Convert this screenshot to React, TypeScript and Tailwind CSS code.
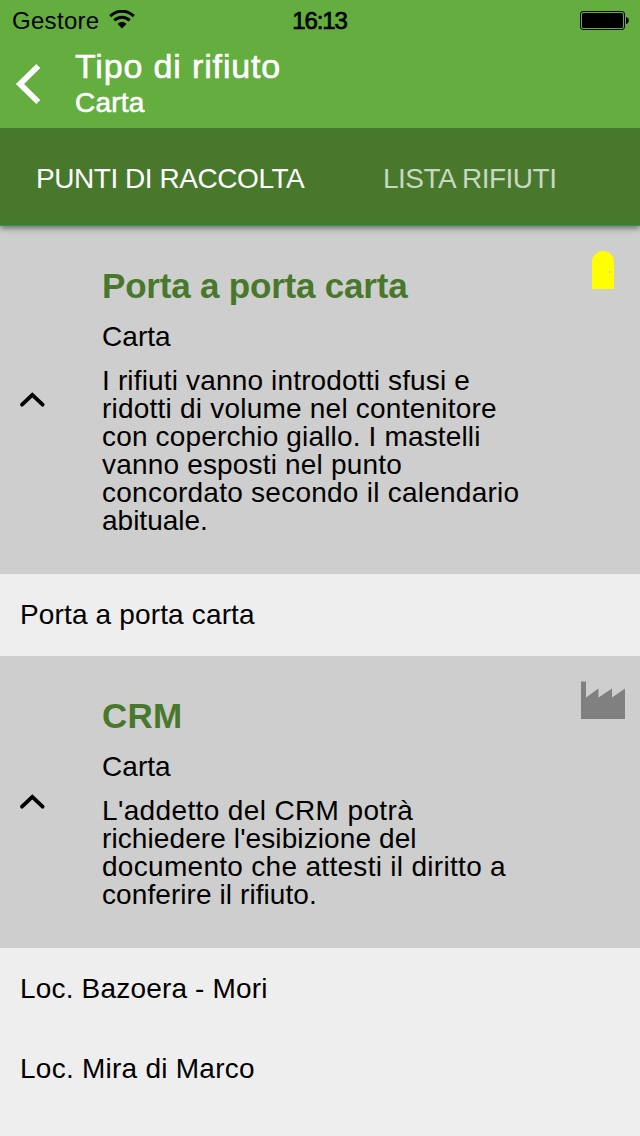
import type { ReactNode } from "react";

type Line = { text: string; tracking: string };

function StatusBar() {
  return (
    <div className="grid h-10 grid-cols-3 items-center pl-3 pr-[11px] text-2xl text-black">
      <div className="flex items-center gap-[10px] pt-[2px]">
        <span className="tracking-[0.3px]">Gestore</span>
        <svg width="26" height="19" viewBox="0 0 26 19" fill="none" stroke="#000" strokeWidth="3" className="-mt-[3px]">
          <path d="M1.2 6.2C8 -.3 18 -.3 24.8 6.2" />
          <path d="M5.3 10.4C9.7 6.2 16.3 6.2 20.7 10.4" />
          <path d="M13 18.4L8.6 13.9C11 11.5 15 11.5 17.4 13.9Z" fill="#000" stroke="none" />
        </svg>
      </div>
      <span className="pr-[2px] pt-[2px] text-center tracking-[-1.1px] [-webkit-text-stroke:0.7px_#000]">16:13</span>
      <svg width="50" height="19" viewBox="0 0 50 19" className="justify-self-end">
        <rect x="1.5" y=".5" width="44" height="18" rx="2.5" fill="none" stroke="#000" />
        <rect x="3" y="2" width="41" height="15" rx="1.5" fill="#000" />
        <path d="M47 6C50.7 6.4 50.7 12.6 47 13Z" fill="#000" />
      </svg>
    </div>
  );
}

function Header() {
  return (
    <header className="flex h-[88px] text-white">
      <svg width="74" height="88" viewBox="0 0 74 88" fill="none" stroke="#fff" strokeWidth="5.8">
        <path d="M38.3 26L20 44L38.3 62" />
      </svg>
      <div className="pl-px pt-[6px]">
        <h1 className="h-[41px] text-[34px] leading-10 tracking-[0.85px] [-webkit-text-stroke:0.6px_#fff]">Tipo di rifiuto</h1>
        <p className="h-8 text-[28px] leading-8 tracking-[0.2px] [-webkit-text-stroke:0.6px_#fff]">Carta</p>
      </div>
    </header>
  );
}

function Chevron() {
  return (
    <svg width="102" height="24" viewBox="0 0 102 24" fill="none" stroke="#000" strokeWidth="3.8" strokeLinecap="round" className="shrink-0">
      <path d="M22 16.7L32.3 6.8L42.6 16.7" />
    </svg>
  );
}

function Section({ title, titleTracking, lines, icon }: { title: string; titleTracking: string; lines: Line[]; icon: ReactNode }) {
  return (
    <section className="flex items-stretch bg-[#cecece] py-10">
      <div className="flex items-center">
        <Chevron />
      </div>
      <div className="flex-1 whitespace-nowrap text-[28px] leading-7">
        <h2 className={`mb-[17px] h-10 text-[35px] font-bold leading-10 text-[#48782c] ${titleTracking}`}>{title}</h2>
        <p className="mb-4 tracking-[0.05px]">Carta</p>
        <p className="-mb-px">
          {lines.map((line) => (
            <span key={line.text} className={`block ${line.tracking}`}>{line.text}</span>
          ))}
        </p>
      </div>
      <div className="-mt-4 mr-[14px] h-10">{icon}</div>
    </section>
  );
}

function Row({ children, className }: { children: ReactNode; className: string }) {
  return <div className={`flex items-center px-5 text-[28px] leading-7 ${className}`}>{children}</div>;
}

const doorIcon = (
  <svg width="46" height="40" viewBox="0 0 46 40">
    <path fillRule="evenodd" d="M12 39V12A11 11 0 0 1 34 12V39ZM29 21V23H31V21Z" fill="#ff0" />
  </svg>
);

const factoryIcon = (
  <svg width="46" height="40" viewBox="0 0 46 40">
    <path d="M1 39V1.5H6V17.5L18.5 8.5V17.5L32 8.5V17.5L45 8.5V39Z" fill="#808080" />
  </svg>
);

const portaLines: Line[] = [
  { text: "I rifiuti vanno introdotti sfusi e", tracking: "tracking-[0.16px]" },
  { text: "ridotti di volume nel contenitore", tracking: "tracking-[0.22px]" },
  { text: "con coperchio giallo. I mastelli", tracking: "tracking-[0.16px]" },
  { text: "vanno esposti nel punto", tracking: "tracking-[0.18px]" },
  { text: "concordato secondo il calendario", tracking: "tracking-[0.25px]" },
  { text: "abituale.", tracking: "tracking-[0px]" },
];

const crmLines: Line[] = [
  { text: "L'addetto del CRM potrà", tracking: "tracking-[0.37px]" },
  { text: "richiedere l'esibizione del", tracking: "tracking-[0.1px]" },
  { text: "documento che attesti il diritto a", tracking: "tracking-[0.3px]" },
  { text: "conferire il rifiuto.", tracking: "tracking-[0.08px]" },
];

export default function App() {
  return (
    <div className="h-[1136px] w-[640px] overflow-hidden bg-[#eee] font-['Liberation_Sans',Arial,sans-serif] text-black">
      <div className="relative z-10 bg-[#64ad3f]">
        <StatusBar />
        <Header />
      </div>
      <nav className="relative flex h-[98px] items-center border-b border-[#38914a] bg-[#48782c] pt-1 text-[28px] leading-8 text-white shadow-[0_2px_6px_rgba(0,0,0,0.5)]">
        <span className="w-[348px] pl-9 tracking-[-0.45px]">PUNTI DI RACCOLTA</span>
        <span className="pl-[35px] tracking-[-0.5px] text-[#c8d7c0]">LISTA RIFIUTI</span>
      </nav>
      <main>
        <Section title="Porta a porta carta" titleTracking="tracking-[-0.2px]" lines={portaLines} icon={doorIcon} />
        <Row className="h-[82px] tracking-[0.15px]">Porta a porta carta</Row>
        <Section title="CRM" titleTracking="tracking-[0.2px]" lines={crmLines} icon={factoryIcon} />
        <Row className="h-20 pt-[2px] tracking-[0.18px]">Loc. Bazoera - Mori</Row>
        <Row className="h-20 pt-[2px] tracking-[0.25px]">Loc. Mira di Marco</Row>
      </main>
    </div>
  );
}
